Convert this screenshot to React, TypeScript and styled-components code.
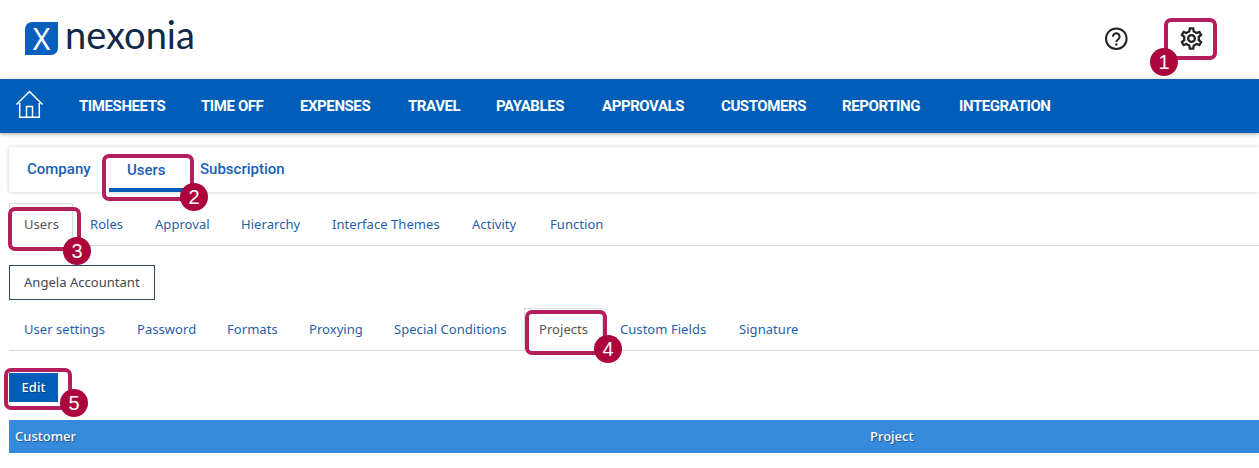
import React from 'react';
import styled, { createGlobalStyle } from 'styled-components';

const GlobalStyle = createGlobalStyle`
  * { box-sizing: border-box; }
  body { margin: 0; background: #fff; overflow: hidden; }
`;

const Page = styled.div`
  position: relative;
  width: 1259px;
  height: 468px;
  overflow: hidden;
  background: #fff;
  font-family: 'Noto Sans', sans-serif;
`;

const Header = styled.header`
  display: flex;
  align-items: center;
  height: 79px;
  padding: 0 54px 0 25px;
`;

const Brand = styled.div`
  display: flex;
  align-items: flex-start;
  flex: 1;
  height: 79px;
  padding-top: 22px;
`;

const BrandTile = styled.span`
  display: flex;
  justify-content: center;
  width: 33px;
  height: 33px;
  border-radius: 7px 0 7px 0;
  background: #0a5fbd;
  color: #fff;
  font: 30px/33px 'Noto Sans', sans-serif;
`;

const BrandName = styled.span`
  margin: -8px 0 0 7px;
  color: #10284a;
  font: 38px/40px Lato, sans-serif;
  letter-spacing: 0;
`;

const HeaderIcons = styled.div`
  display: flex;
  align-items: center;
  gap: 50px;
  padding-bottom: 2px;
  svg { display: block; }
`;

const MainNav = styled.nav`
  display: flex;
  align-items: center;
  height: 54px;
  padding: 0 0 2px 15px;
  background: #005eb8;
  border-top: 1px solid #1a5c9c;
  box-shadow: 0 1px 4px rgba(0, 0, 0, 0.35);
`;

const HomeLink = styled.a`
  width: 64px;
  padding-bottom: 3px;
  svg { display: block; }
`;

const NavItem = styled.a<{ $w: number }>`
  flex: none;
  width: ${(p) => p.$w}px;
  color: #fff;
  font: bold 15px/20px Roboto, sans-serif;
  letter-spacing: -0.42px;
  white-space: nowrap;
`;

const SectionBar = styled.nav`
  display: flex;
  height: 45px;
  margin: 14px 0 0 9px;
  padding-left: 18px;
  box-shadow: 0 0 4px rgba(0, 0, 0, 0.2);
`;

const SectionTab = styled.a<{ $w: number; $active?: boolean }>`
  flex: none;
  width: ${(p) => p.$w}px;
  height: 45px;
  padding: ${(p) => (p.$active ? '13px 0 0 18px' : '12px 0 0')};
  border-bottom: ${(p) => (p.$active ? '4px solid #005eb8' : '0')};
  margin-right: ${(p) => (p.$active ? '7px' : '0')};
  color: #1b5fb4;
  font: 500 15px/20px Roboto, sans-serif;
  white-space: nowrap;
`;

const SubTabs = styled.nav<{ $top: number }>`
  display: flex;
  height: 43px;
  margin: ${(p) => p.$top}px 0 0 9px;
  border-bottom: 1px solid #dcdcdc;
`;

const SubTab = styled.a<{ $w: number; $active?: boolean }>`
  flex: none;
  width: ${(p) => p.$w}px;
  height: ${(p) => (p.$active ? 43 : 42)}px;
  padding: 10px 0 0 14px;
  border: 1px solid ${(p) => (p.$active ? '#dcdcdc' : 'transparent')};
  border-bottom: 0;
  background: #fff;
  color: ${(p) => (p.$active ? '#555' : '#1f5fa8')};
  font-size: 13px;
  line-height: 20px;
  letter-spacing: 0.05px;
  white-space: nowrap;
`;

const TabGap = styled.span<{ $w: number }>`
  width: ${(p) => p.$w}px;
`;

const UserChip = styled.div`
  width: 146px;
  height: 35px;
  margin: 19px 0 0 9px;
  padding-left: 14px;
  border: 1px solid #2c4a6b;
  color: #3c4858;
  font-size: 13px;
  line-height: 32px;
  letter-spacing: 0.03px;
  white-space: nowrap;
`;

const EditButton = styled.button`
  display: block;
  width: 49px;
  height: 29px;
  margin: 22px 0 0 9px;
  padding: 0 0 1px;
  border: 0;
  background: #005eb8;
  color: #fff;
  font: 500 13px/26px 'Noto Sans', sans-serif;
  text-shadow: 1px 1px 1px rgba(0, 0, 0, 0.35);
`;

const TableHead = styled.div`
  display: grid;
  grid-template-columns: 855px 1fr;
  height: 33px;
  margin: 18px 0 0 9px;
  background: #368adb;
  color: #fff;
  font-size: 13px;
  font-weight: 500;
  line-height: 33px;
  text-shadow: 1px 1px 1px rgba(0, 0, 0, 0.4);
`;

const HeadCell = styled.div`
  padding-left: 6px;
`;

const Callout = styled.div<{ $x: number; $y: number; $w: number; $h: number }>`
  position: absolute;
  left: ${(p) => p.$x}px;
  top: ${(p) => p.$y}px;
  width: ${(p) => p.$w}px;
  height: ${(p) => p.$h}px;
  border: 4px solid #b31f5d;
  border-radius: 7px;
`;

const Badge = styled.span<{ $x: number; $y: number }>`
  position: absolute;
  left: ${(p) => p.$x}px;
  top: ${(p) => p.$y}px;
  width: 28px;
  height: 28px;
  border-radius: 50%;
  background: #ab053c;
  color: #fff;
  font: 20px/28px 'Liberation Sans', sans-serif;
  text-align: center;
`;

const navItems: [string, number][] = [
  ['TIMESHEETS', 122], ['TIME OFF', 99], ['EXPENSES', 108], ['TRAVEL', 88], ['PAYABLES', 106],
  ['APPROVALS', 119], ['CUSTOMERS', 121], ['REPORTING', 117], ['INTEGRATION', 100],
];

const userTabs: [string, number][] = [
  ['Roles', 65], ['Approval', 86], ['Hierarchy', 91], ['Interface Themes', 140], ['Activity', 78], ['Function', 90],
];

const settingTabs: [string, number][] = [
  ['User settings', 113], ['Password', 90], ['Formats', 82], ['Proxying', 85], ['Special Conditions', 145],
];

const callouts = [
  { n: 1, box: [1164, 18, 53, 42], badge: [1150, 48] },
  { n: 2, box: [102, 154, 92, 47], badge: [180, 183] },
  { n: 3, box: [8, 207, 73, 44], badge: [63, 237] },
  { n: 4, box: [525, 310, 82, 45], badge: [594, 335] },
  { n: 5, box: [4, 368, 68, 42], badge: [60, 389] },
];

export default function App() {
  return (
    <Page>
      <GlobalStyle />
      <Header>
        <Brand>
          <BrandTile>X</BrandTile>
          <BrandName>nexonia</BrandName>
        </Brand>
        <HeaderIcons>
          <svg width="24" height="24" viewBox="0 0 24 24" fill="none" stroke="#222" strokeWidth="2">
            <circle cx="12.300" cy="11.700" r="10.300" />
            <path d="M9 9.700a3.300 3.300 0 1 1 5.600 2.200C13.500 12.900 12.300 13.500 12.300 15" />
            <path d="M12.300 16.400V18.600" strokeWidth="2.200" />
          </svg>
          <svg width="27" height="27" viewBox="0 0 24 24" fill="#222">
            <path d="M19.430 12.980c.040-.320.070-.640.070-.980s-.030-.660-.070-.980l2.110-1.650c.190-.150.240-.420.120-.640l-2-3.460c-.090-.160-.260-.250-.440-.250-.060 0-.120.010-.170.030l-2.490 1c-.520-.400-1.080-.730-1.690-.980l-.380-2.650C14.460 2.180 14.250 2 14 2h-4c-.250 0-.460.180-.490.420l-.380 2.650c-.610.250-1.170.590-1.690.980l-2.490-1c-.060-.020-.120-.030-.180-.030-.170 0-.340.090-.430.250l-2 3.460c-.130.220-.070.490.120.640l2.110 1.650c-.040.320-.070.650-.070.980s.030.660.070.980l-2.110 1.650c-.190.150-.240.420-.120.640l2 3.460c.090.160.260.250.440.250.060 0 .120-.010.170-.030l2.490-1c.520.400 1.080.730 1.690.980l.380 2.650c.030.240.240.420.490.420h4c.250 0 .460-.180.490-.420l.380-2.650c.610-.250 1.170-.590 1.690-.980l2.490 1c.060.020.120.030.180.030.170 0 .340-.090.430-.250l2-3.460c.120-.220.070-.490-.120-.640l-2.110-1.650zm-1.980-1.710c.040.310.050.520.050.730s-.020.430-.050.730l-.140 1.130.890.700 1.080.840-.700 1.210-1.270-.510-1.040-.420-.900.680c-.430.320-.840.560-1.250.730l-1.060.430-.160 1.130-.200 1.350h-1.400l-.190-1.350-.160-1.130-1.060-.430c-.430-.180-.830-.410-1.230-.710l-.910-.700-1.060.430-1.270.510-.700-1.210 1.080-.840.890-.700-.140-1.130c-.030-.310-.050-.540-.050-.740s.020-.430.050-.730l.140-1.130-.890-.700-1.080-.840.700-1.210 1.270.510 1.040.420.900-.680c.430-.320.840-.560 1.250-.730l1.060-.430.160-1.130.200-1.350h1.390l.190 1.350.160 1.130 1.060.430c.430.180.830.410 1.230.710l.910.700 1.060-.430 1.270-.510.700 1.210-1.070.850-.890.700.140 1.130zM12 8c-2.210 0-4 1.790-4 4s1.790 4 4 4 4-1.790 4-4-1.790-4-4-4zm0 6c-1.100 0-2-.900-2-2s.900-2 2-2 2 .900 2 2-.900 2-2 2z" />
          </svg>
        </HeaderIcons>
      </Header>

      <MainNav>
        <HomeLink>
          <svg width="29" height="30" viewBox="0 0 29 30" fill="none" stroke="#fff" strokeWidth="1.500">
            <path d="M1.500 15.500 14.500 2.500 27.500 15.500M4.700 14V28.200H24.300V14M11.500 28V17.500H17.500V28" />
          </svg>
        </HomeLink>
        {navItems.map(([label, w]) => <NavItem key={label} $w={w}>{label}</NavItem>)}
      </MainNav>

      <SectionBar>
        <SectionTab $w={82}>Company</SectionTab>
        <SectionTab $w={84} $active>Users</SectionTab>
        <SectionTab $w={90}>Subscription</SectionTab>
      </SectionBar>

      <SubTabs $top={11}>
        <SubTab $w={64} $active>Users</SubTab>
        <TabGap $w={2} />
        {userTabs.map(([label, w]) => <SubTab key={label} $w={w}>{label}</SubTab>)}
      </SubTabs>

      <UserChip>Angela Accountant</UserChip>

      <SubTabs $top={8}>
        {settingTabs.map(([label, w]) => <SubTab key={label} $w={w}>{label}</SubTab>)}
        <SubTab $w={79} $active>Projects</SubTab>
        <TabGap $w={2} />
        <SubTab $w={119}>Custom Fields</SubTab>
        <SubTab $w={90}>Signature</SubTab>
      </SubTabs>

      <EditButton>Edit</EditButton>

      <TableHead>
        <HeadCell>Customer</HeadCell>
        <HeadCell>Project</HeadCell>
      </TableHead>

      {callouts.map(({ n, box, badge }) => (
        <React.Fragment key={n}>
          <Callout $x={box[0]} $y={box[1]} $w={box[2]} $h={box[3]} />
          <Badge $x={badge[0]} $y={badge[1]}>{n}</Badge>
        </React.Fragment>
      ))}
    </Page>
  );
}
